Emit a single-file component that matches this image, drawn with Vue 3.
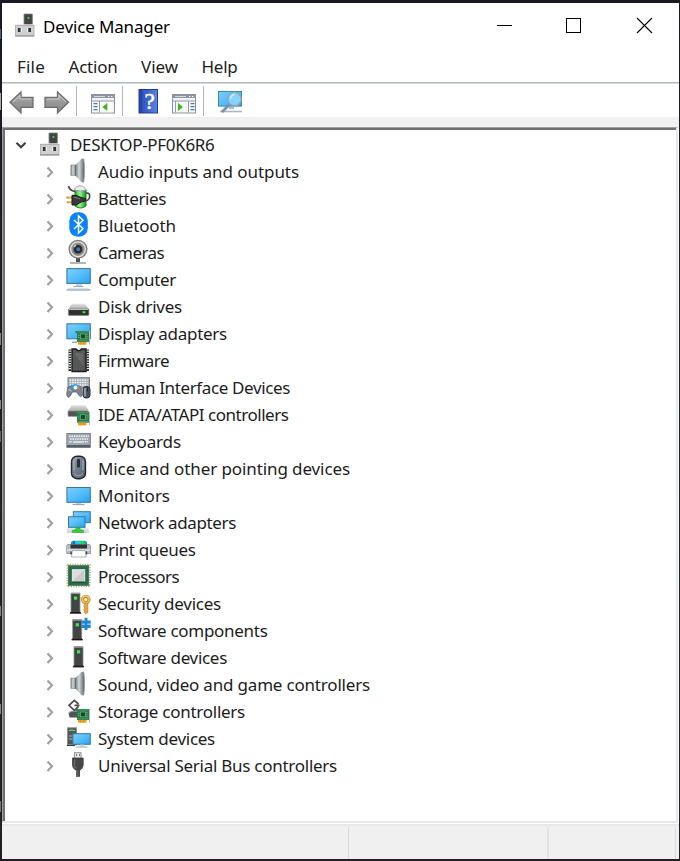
<script setup>
import { reactive } from 'vue'

const menus = reactive([
  { name: 'File', width: 28 },
  { name: 'Action', width: 49 },
  { name: 'View', width: 37 },
  { name: 'Help', width: 36 },
])

// width is the advance each label is set to, in pixels
const devices = [
  { name: 'Audio inputs and outputs', icon: 'speaker', width: 201 },
  { name: 'Batteries', icon: 'battery', width: 68 },
  { name: 'Bluetooth', icon: 'bluetooth', width: 78 },
  { name: 'Cameras', icon: 'camera', width: 66 },
  { name: 'Computer', icon: 'computer', width: 78 },
  { name: 'Disk drives', icon: 'disk', width: 84 },
  { name: 'Display adapters', icon: 'display', width: 129 },
  { name: 'Firmware', icon: 'firmware', width: 71 },
  { name: 'Human Interface Devices', icon: 'hid', width: 192 },
  { name: 'IDE ATA/ATAPI controllers', icon: 'ide', width: 190.5 },
  { name: 'Keyboards', icon: 'keyboard', width: 83 },
  { name: 'Mice and other pointing devices', icon: 'mouse', width: 252 },
  { name: 'Monitors', icon: 'monitor', width: 72 },
  { name: 'Network adapters', icon: 'network', width: 138 },
  { name: 'Print queues', icon: 'printer', width: 97.5 },
  { name: 'Processors', icon: 'cpu', width: 81 },
  { name: 'Security devices', icon: 'security', width: 123 },
  { name: 'Software components', icon: 'component', width: 169.5 },
  { name: 'Software devices', icon: 'software', width: 129 },
  { name: 'Sound, video and game controllers', icon: 'speaker', width: 272 },
  { name: 'Storage controllers', icon: 'storage', width: 147 },
  { name: 'System devices', icon: 'system', width: 117 },
  { name: 'Universal Serial Bus controllers', icon: 'usb', width: 239 },
]

// Tracks the text so that it fills exactly the given width
const vFit = {
  mounted(el, { value }) {
    const natural = el.getBoundingClientRect().width
    el.style.letterSpacing = (value - natural) / el.textContent.length + 'px'
  },
}
</script>

<template>
  <div class="desktop">
    <svg class="defs" width="0" height="0">
      <defs>
        <linearGradient id="blue" x1="0" y1="0" x2="1" y2="1">
          <stop offset="0" stop-color="#7fd0fb" /><stop offset=".5" stop-color="#55bdfa" /><stop offset="1" stop-color="#28a3f5" />
        </linearGradient>
        <linearGradient id="metal" x1="0" y1="0" x2="1" y2="0">
          <stop offset="0" stop-color="#777e83" /><stop offset=".45" stop-color="#d3d8db" /><stop offset="1" stop-color="#6f7579" />
        </linearGradient>
        <linearGradient id="silver" x1="0" y1="0" x2="0" y2="1">
          <stop offset="0" stop-color="#e4e4e4" /><stop offset="1" stop-color="#a9a9a9" />
        </linearGradient>
        <linearGradient id="arrow" x1="0" y1="0" x2="0" y2="1">
          <stop offset="0" stop-color="#b9b9b9" /><stop offset=".5" stop-color="#979797" /><stop offset="1" stop-color="#888" />
        </linearGradient>
        <linearGradient id="help" x1="0" y1="0" x2="1" y2="0">
          <stop offset="0" stop-color="#2745a4" /><stop offset=".25" stop-color="#3458c4" /><stop offset="1" stop-color="#5c84e2" />
        </linearGradient>
        <linearGradient id="green" x1="0" y1="0" x2="1" y2="0">
          <stop offset="0" stop-color="#25ad30" /><stop offset=".45" stop-color="#9af28d" /><stop offset="1" stop-color="#159326" />
        </linearGradient>
        <linearGradient id="slate" x1="0" y1="0" x2="1" y2="1">
          <stop offset="0" stop-color="#8e99a7" /><stop offset="1" stop-color="#566171" />
        </linearGradient>
        <g id="board">
          <path d="M.500 1H14v11H2V3H.500z" fill="#2a7d48" />
          <path d="M14.500 1v13.500" stroke="#b4bcb4" />
          <path d="M2.500 2h11M2.500 10.800h11" stroke="#4ba36b" stroke-width=".8" />
          <rect x="5.500" y="4" width="5" height="4.800" fill="#164a2b" stroke="#6fb587" stroke-width=".7" />
          <path d="M12 4v5M3.800 5v4" stroke="#8ed19e" stroke-width=".8" stroke-dasharray="1 1" />
          <path d="M3 12h8.500v2.700H3z" fill="#f2a21a" /><path d="M5.500 12v2.700M8.500 12v2.700" stroke="#d98a10" stroke-width=".6" />
        </g>
        <g id="tower">
          <path d="M1 0h9v19H1z" fill="#424446" stroke="#8b8d8e" stroke-width=".8" />
          <path d="M1 .500h9" stroke="#979999" />
          <path d="M0 20.300h11l-1-1.300H1z" fill="#111" stroke="#222" stroke-width=".8" />
          <rect x="4" y="3.500" width="3.200" height="3.200" fill="#39ef43" />
        </g>
        <g id="device">
          <path d="M12 2h8.400v11H12z" fill="#444" stroke="#858585" stroke-width=".8" />
          <path d="M15.500 5h1.900v1.900h-1.900z" fill="#32df35" />
          <path d="M4 12.300h17.500v1.500H4z" fill="#e9e9e9" />
          <rect x="3.400" y="13.400" width="18.600" height="10.400" fill="#d0d0d2" stroke="#a9a9ab" stroke-width=".8" />
          <path d="M3.200 24h19" stroke="#858585" />
          <rect x="5.900" y="16" width="2.800" height="4" fill="#333" /><rect x="16.200" y="16" width="2.800" height="4" fill="#333" />
          <path d="M9.300 16v4M15.600 16v4" stroke="#f7f7f7" />
        </g>
      </defs>
    </svg>

    <aside class="backdrop">
      <i class="chip c1"></i><i class="chip c2"></i><i class="chip c3"></i><i class="chip c4"></i>
      <i class="chip c5"></i><i class="chip c6"></i><i class="chip c7"></i><i class="chip c8"></i>
    </aside>

    <main class="window">
      <header class="titlebar">
        <svg class="app-icon" width="26" height="27" viewBox="0 0 26 27"><use href="#device" /></svg>
        <h1><span v-fit="127">Device Manager</span></h1>
        <svg class="controls" width="160" height="20" viewBox="0 0 160 20" shape-rendering="crispEdges">
          <path d="M1 9.500h15" stroke="#000" />
          <rect x="70.500" y="2.500" width="14" height="14" fill="none" stroke="#000" />
          <path d="M141 2l15 15M156 2l-15 15" stroke="#000" stroke-width="1.100" shape-rendering="auto" />
        </svg>
      </header>

      <nav class="menubar">
        <span v-for="m in menus" :key="m.name"><span v-fit="m.width">{{ m.name }}</span></span>
      </nav>

      <section class="toolbar">
        <svg width="250" height="33" viewBox="0 0 250 33">
          <path d="M8 18.300l11-10.300v5.500h12v9.800H19v5.600z" fill="url(#arrow)" stroke="#6d6d6d" stroke-width="1.300" />
          <path d="M11 18l7-6.500V15h11" fill="none" stroke="#cecece" stroke-width=".9" />
          <path d="M66.500 18.300L55.500 8v5.500H43v9.800h12.500v5.600z" fill="url(#arrow)" stroke="#6d6d6d" stroke-width="1.300" />
          <path d="M45 15h12v-4l7 7" fill="none" stroke="#cecece" stroke-width=".9" />
          <path d="M74.500 2v30M120.500 2v30M201.500 2v30" stroke="#b5b5b5" />

          <g id="pane">
            <rect x="89.500" y="10.500" width="23" height="18.500" fill="#f7f7f7" stroke="#8c929c" />
            <path d="M90 11h22v3H90z" fill="#8b94a4" /><path d="M92 12.500h11" stroke="#d1d6df" /><path d="M106 12.500h1.500M109 12.500h1.500" stroke="#fff" />
            <path d="M90 15.500h22" stroke="#eef" /><path d="M90 17h22" stroke="#9198a4" />
          </g>
          <path d="M97.500 17v11.500" stroke="#969da8" /><path d="M91.500 19.700h4M91.500 22.700h4M91.500 25.700h4" stroke="#467daf" stroke-width="1.300" />
          <path d="M98.500 18h11v10.300h-11z" fill="#fff" /><path d="M105.300 19v8l-5-4z" fill="#3db51f" />

          <rect x="137" y="5.500" width="18.500" height="23.500" fill="url(#help)" stroke="#203d93" />
          <path d="M139.500 6v22.500" stroke="#233f99" />
          <text class="help-mark" x="142.500" y="25">?</text>

          <use href="#pane" x="81" />
          <path d="M186.500 17v11.500" stroke="#969da8" /><path d="M188.500 19.700h4M188.500 22.700h4M188.500 25.700h4" stroke="#467daf" stroke-width="1.300" />
          <path d="M173.500 17v11.500" stroke="#969da8" /><path d="M176 19v8l5-4z" fill="#3db51f" />

          <rect x="216.500" y="7.500" width="23" height="14.600" fill="url(#blue)" stroke="#3c88ac" />
          <path d="M218 27.500h22" stroke="#aab7c2" stroke-width="1.600" /><path d="M227 23h5v2h-5z" fill="#a7bbc8" />
          <circle cx="232.500" cy="15" r="6.700" fill="#84d4fb" stroke="#8ea8b8" stroke-width="1.500" />
          <path d="M228.500 15a4.500 4.500 0 0 1 4-4.500" fill="none" stroke="#c2edff" stroke-width="1.500" />
          <path d="M227.500 20.500l-7.500 7.500" stroke="#7593a7" stroke-width="2.800" />
        </svg>
      </section>

      <section class="tree">
        <div class="row root">
          <svg class="chevron" width="12" height="27" viewBox="0 0 12 27"><path d="M1.500 11.700l4.500 4.500 4.500-4.500" fill="none" stroke="#404040" stroke-width="2.200" /></svg>
          <svg class="icon" width="26" height="27" viewBox="0 0 26 27"><use href="#device" /></svg>
          <span class="label"><span v-fit="144.500">DESKTOP-PF0K6R6</span></span>
        </div>

        <div v-for="d in devices" :key="d.name" class="row">
          <svg class="chevron" width="10" height="27" viewBox="0 0 10 27"><path d="M2.500 9.600l4.500 4.700-4.500 4.700" fill="none" stroke="#a0a0a0" stroke-width="2.200" /></svg>
          <svg class="icon" width="26" height="27" viewBox="0 0 26 27">
            <g v-if="d.icon === 'speaker'">
              <path d="M4.800 7h5v10.500h-5z" fill="url(#metal)" stroke="#858b90" stroke-width=".6" />
              <path d="M9.500 7l6-6.200h2v23.500h-2l-6-6.600z" fill="url(#metal)" />
              <path d="M17.500.800c1.300 2 1.300 21 0 23.500-1.500-4-1.500-19 0-23.500z" fill="#6b7074" stroke="#8d9397" stroke-width=".8" />
              <path d="M9.500 7v10.500" stroke="#666c71" />
            </g>
            <g v-else-if="d.icon === 'battery'">
              <path d="M9 4.500h11V21q-5.500 4-11 0z" fill="url(#green)" stroke="#148526" />
              <path d="M8.500 5Q9.500 .800 14 .800T20 5q-5.500 2-11.500 0z" fill="#eceaf3" stroke="#94929c" stroke-width=".8" />
              <path d="M2.500 1q1 4.500 6.500 5.500M19.500 16q5-1 4-6.500-1-2-3.500-1.300" fill="none" stroke="#4a4a4a" stroke-width="1.700" />
              <path d="M.300 12.500h6M.800 17.300h6" stroke="#c8942a" stroke-width="2" /><path d="M2 12h4M2.500 16.800h4" stroke="#ffe393" stroke-width=".8" />
              <path d="M6 10.300h4l5 2.200 4.500 1v2.500l-4.500 1-5 3H6z" fill="#3a3a3a" stroke="#1c1c1c" /><path d="M8 12l6 2" stroke="#7d7d7d" />
            </g>
            <g v-else-if="d.icon === 'bluetooth'">
              <rect x="3.300" y=".200" width="18.500" height="24.600" rx="8.500" fill="#0a82fa" />
              <path d="M8 8l9 8.700-4.500 4.300V4l4.500 4.300L8 17" fill="none" stroke="#fff" stroke-width="1.500" />
            </g>
            <g v-else-if="d.icon === 'camera'">
              <path d="M10 18.500h4V23h-4z" fill="#4e4e4e" /><path d="M4 24h16" stroke="#8c8c8c" stroke-width="1.300" />
              <circle cx="12" cy="10.300" r="8.800" fill="#e6e6e6" stroke="#7b7b7b" stroke-width="1.400" />
              <circle cx="12" cy="10.300" r="6" fill="#777" stroke="#8f8f8f" stroke-width="1.400" />
              <circle cx="12" cy="10.300" r="3.800" fill="#20292f" stroke="#2a2a2a" /><circle cx="12.300" cy="10.300" r="2" fill="#3f78ad" />
              <path d="M8 8l2-2" stroke="#d4d4d4" stroke-width="1.300" />
            </g>
            <g v-else-if="d.icon === 'computer'">
              <rect x=".900" y="2.600" width="23.400" height="14.800" fill="url(#blue)" stroke="#35769a" />
              <path d="M10 18h6v2.500h-6z" fill="#c4d3df" /><path d="M7.500 20.500h10" stroke="#91a6b8" />
              <path d="M2.500 21.700h20l2 2.500H.500z" fill="#d9e4ec" /><path d="M.500 24h24" stroke="#7e9caf" />
            </g>
            <g v-else-if="d.icon === 'disk'">
              <path d="M6 10.800h13l3.800 5.400H2.400z" fill="url(#silver)" /><rect x="2.400" y="16" width="20.500" height="6.400" rx=".8" fill="#303030" stroke="#898989" stroke-width=".8" />
              <path d="M3 16.500h19" stroke="#c1c1c1" /><path d="M16.500 18.200h3v2h-3z" fill="#2cf030" />
            </g>
            <g v-else-if="d.icon === 'display'">
              <rect x=".900" y="3.800" width="23.400" height="15" fill="url(#blue)" stroke="#35769a" /><path d="M6 22.300h5" stroke="#91a6b8" stroke-width="1.500" />
              <use href="#board" x="9" y="10" />
            </g>
            <g v-else-if="d.icon === 'firmware'">
              <path d="M3.800 2.500v21.500M21.700 2.500v21.500" stroke="#222" stroke-width="2.500" /><path d="M3.800 3.500v20M21.700 3.500v20" stroke="#e5e5e5" stroke-width="2.500" stroke-dasharray="1.300 1.200" />
              <path d="M6 2h4q2.500 3.500 5.500 0H20v22.500H6z" fill="#555758" stroke="#1b1b1b" stroke-width="1.400" /><path d="M8 6h9v13z" fill="#646668" />
            </g>
            <g v-else-if="d.icon === 'hid'">
              <rect x="2" y="3.700" width="21.500" height="10.500" fill="#a8adb3" stroke="#7a8188" /><path d="M3.500 6h18M3.500 8.500h18M3.500 11h18" stroke="#f4f6f7" stroke-width="1.500" stroke-dasharray="1.700 .8" />
              <path d="M2 13q4-2.500 7 0 4-2.500 6 0l1 8q-1 4-4-1l-1.500-2h-4L4 22.500q-3 2.500-3.300-3z" fill="#7d8690" stroke="#5a636d" stroke-width=".8" />
              <path d="M5 12.500q4-4.500 8-.500V15H5z" fill="#299df0" /><circle cx="9.500" cy="13.500" r="2" fill="#edf6ff" /><circle cx="12.800" cy="14" r="1.200" fill="#ed702b" />
              <path d="M2.500 15.500q2 0 2.500 2" stroke="#ced4d8" fill="none" />
              <rect x="17" y="12.500" width="7" height="11.500" rx="3" fill="#485360" stroke="#27313a" /><path d="M19 14v8.500" stroke="#aab3bb" stroke-width="1.500" /><path d="M21.500 13.500v4" stroke="#202830" />
            </g>
            <g v-else-if="d.icon === 'ide'">
              <path d="M5.500 4.200h14l3.500 6H2z" fill="url(#silver)" /><path d="M2 10h20v5.500H3q-1 0-1-1z" fill="#545454" stroke="#999" stroke-width=".7" /><use href="#board" x="9" y="9.700" />
            </g>
            <g v-else-if="d.icon === 'keyboard'">
              <rect x=".800" y="5.500" width="23.600" height="13.700" fill="#a0a6ad" stroke="#7d868f" /><path d="M1 17h23v2.500H1z" fill="#545e69" />
              <path d="M3 8.300h20M4 11h18M3 13.800h3M19 13.800h3" stroke="#f2f4f5" stroke-width="1.500" stroke-dasharray="1.600 .8" /><path d="M7 14h11" stroke="#f2f4f5" stroke-width="1.400" />
            </g>
            <g v-else-if="d.icon === 'mouse'">
              <rect x="5.500" y="1.200" width="14" height="22.500" rx="5.500" fill="url(#slate)" stroke="#22262a" stroke-width="1.400" />
              <path d="M8 15V5.500q1-2 3-2.500M17 15V5.500" stroke="#a3aebb" stroke-width="1.200" fill="none" /><rect x="11" y="4" width="3" height="8.500" rx=".8" fill="#2b3037" /><path d="M8 18.500q4.500 4.500 9 0" fill="none" stroke="#9aa6b6" />
            </g>
            <g v-else-if="d.icon === 'monitor'">
              <rect x=".900" y="5.500" width="23.400" height="14.800" fill="url(#blue)" stroke="#35769a" /><path d="M10 21h5v1h-5z" fill="#c4d3df" /><path d="M6.500 22.500h12" stroke="#91a6b8" stroke-width="1.200" />
            </g>
            <g v-else-if="d.icon === 'network'">
              <rect x="7.300" y="2.700" width="17" height="11" fill="url(#blue)" stroke="#35769a" />
              <path d="M.800 19.300h22v3.900h-22z" fill="#dfe1e1" /><path d="M.800 23.200h22" stroke="#aaa" stroke-width=".6" />
              <rect x="2.500" y="7.800" width="16.500" height="10.500" fill="url(#blue)" stroke="#35769a" />
              <path d="M10 18.500h4v2l3.500 1v2H6.300v-2l3.700-1z" fill="#36ca3c" stroke="#25a72e" stroke-width=".6" />
            </g>
            <g v-else-if="d.icon === 'printer'">
              <path d="M5 6l2-1.300h12L21 6v4H5z" fill="#2093dc" /><path d="M9 5h6v5H9z" fill="#28c5e0" /><path d="M15 5h3l2 5h-5z" fill="#1de129" /><path d="M7 5h2v5H7z" fill="#1769bd" />
              <path d="M1.500 8.500h22q1 0 1 2v7H.700v-7q0-2 .8-2z" fill="#b7bbc0" stroke="#8a9096" stroke-width=".8" /><path d="M4.500 8.500h16.500v4H4.500z" fill="#303438" />
              <path d="M1 14h23" stroke="#e4e6e8" stroke-width="1.500" /><path d="M6.500 14.500h12.500l1.200 6.500H5.300z" fill="#fff" stroke="#9a9fa4" stroke-width=".8" /><path d="M5 15.500v3M20.500 15.500v3" stroke="#444" stroke-width="1.400" />
            </g>
            <g v-else-if="d.icon === 'cpu'">
              <rect x="1.300" y="1.500" width="22.600" height="22" fill="none" stroke="#c5a269" stroke-width="1.500" stroke-dasharray="1.200 1.300" /><rect x="2.500" y="2.700" width="20.200" height="19.600" fill="#286a4b" stroke="#3d7c5c" />
              <rect x="6.400" y="6.700" width="12.300" height="11.600" fill="#dcdcdc" stroke="#e9e9e9" /><path d="M18 7v11H7z" fill="#c8caca" /><path d="M6 19h13" stroke="#17402c" />
            </g>
            <g v-else-if="d.icon === 'security'">
              <use href="#tower" x="4" y="3" />
              <circle cx="19.800" cy="9.500" r="3.200" fill="none" stroke="#ca8a1d" stroke-width="3.200" /><circle cx="19.800" cy="9.300" r="3.300" fill="none" stroke="#f2c76b" stroke-width="1.300" />
              <path d="M18.500 13h3.400v9.500L20 24l-1.500-1v-2l-1-1 1-1v-2l-1-1 1-1z" fill="#e4a635" stroke="#b67514" stroke-width=".5" />
            </g>
            <g v-else-if="d.icon === 'component'">
              <use href="#tower" x="5.700" y="2.700" />
              <path d="M15.500 3.500h9.200v3.200h-9.200zM15.500 7.700h9.200V11h-9.200z" fill="#2587d2" /><path d="M18.500 .800h3v12.300h-3z" fill="#2587d2" /><path d="M16 7.200h2.500M21.500 7.200h3" stroke="#7fb9e5" />
            </g>
            <use v-else-if="d.icon === 'software'" href="#tower" x="7" y="2.700" />
            <g v-else-if="d.icon === 'storage'">
              <path d="M2.500 14.500L5 13h9v6.500H3.500z" fill="#505455" /><path d="M3 14.500L5 13h10" stroke="#c4c7c8" stroke-width="1.200" fill="none" />
              <path d="M12.500 6L8.300 2.300 3 7.300l5.300 5L12.500 8.500M8.500 7.300h5" fill="none" stroke="#4c4c4c" stroke-width="1.700" /><use href="#board" x="9" y="10" />
            </g>
            <g v-else-if="d.icon === 'system'">
              <rect x="1.500" y="2.800" width="9" height="17" fill="#525658" stroke="#8b8f91" /><path d="M3 5.500h6M3 11h4M3 14h4" stroke="#b3b7b9" /><path d="M4 4.500h3v1.500H4z" fill="#36dc31" /><path d="M1 20.500h8" stroke="#333" />
              <rect x="6.900" y="8.700" width="17.400" height="10.600" fill="url(#blue)" stroke="#35769a" /><path d="M14 19.500h4v2h-4z" fill="#c4d3df" /><path d="M10.500 22h11" stroke="#91a6b8" />
            </g>
            <g v-else-if="d.icon === 'usb'">
              <rect x="8.500" y=".700" width="6.500" height="6" fill="#e7e7e7" stroke="#969696" /><path d="M10 3h1M13 3h1" stroke="#555" stroke-width="1.400" />
              <path d="M6.500 6h10.700v7q0 3-3 5H9.500q-3-2-3-5z" fill="#474747" stroke="#303030" stroke-width=".7" /><path d="M8.500 7.500v6q0 2 2 3" fill="none" stroke="#707070" stroke-width="1.300" /><path d="M10 18h4v6.800h-4z" fill="#4b4b4b" /><path d="M11 18v6" stroke="#7a7a7a" />
            </g>
          </svg>
          <span class="label"><span v-fit="d.width">{{ d.name }}</span></span>
        </div>
      </section>

      <footer class="statusbar">
        <div class="pane first"></div><div class="pane second"></div><div class="pane third"></div>
      </footer>
    </main>
  </div>
</template>

<style>
body { margin: 0; background: #1d1b22; }
</style>

<style scoped>
.desktop { box-sizing: border-box; width: 680px; height: 861px; padding: 3px 1px 2px 2px; position: relative; overflow: hidden; background: linear-gradient(#1a1822, #202427 60%, #211f21); font-family: "Noto Sans", "Open Sans", sans-serif; color: #1c1c1c; }
.defs { position: absolute; }
.backdrop { position: absolute; left: 0; top: 0; width: 2px; height: 861px; }
.chip { position: absolute; left: 0; width: 1px; background: #858585; }
.c1 { top: 29px; height: 10px; background: #4c5788; }
.c2 { top: 93px; height: 17px; background: #aaa; }
.c3 { top: 333px; height: 12px; }
.c4 { top: 400px; height: 9px; }
.c5 { top: 431px; height: 11px; background: #666; }
.c6 { top: 606px; height: 10px; }
.c7 { top: 704px; height: 10px; }
.c8 { top: 801px; height: 11px; background: #777; }
.window { width: 677px; height: 856px; background: #fff; display: flex; flex-direction: column; }
.titlebar { height: 46px; flex: none; display: flex; align-items: flex-start; padding-left: 10px; }
.app-icon { margin-top: 9px; }
h1 { margin: 11px 0 0 5px; font-size: 17px; line-height: 26px; font-weight: 400; color: #000; flex: 1; white-space: nowrap; }
h1 > span, .menubar > span > span, .label > span { display: inline-block; white-space: nowrap; }
.controls { margin: 13px 23px 0 0; }
.menubar { height: 33px; flex: none; display: flex; gap: 23.500px; padding: 0 15px; border-bottom: 1px solid #b5b6b8; font-size: 17px; }
.menubar > span { margin-top: 3px; height: 30px; line-height: 30px; }
.toolbar { height: 34px; flex: none; border-bottom: 10px solid #f0f0f0; box-shadow: inset 0 1px #d4dade; }
.toolbar svg { display: block; margin-top: 1px; }
.help-mark { font: 23px "Liberation Serif", serif; fill: #fff; stroke: #fff; stroke-width: .5px; }
.tree { flex: none; box-sizing: border-box; width: 676px; height: 696px; padding: 3px 0 0 2px; background: #fff; border: solid; border-width: 1px 2px 2px 1px; border-color: #a0a0a0 #e8e8e8 #e8e8e8 #a0a0a0; box-shadow: inset 2px 2px #707070; }
.row { height: 27px; display: flex; align-items: center; padding-left: 40px; }
.row .icon { margin-left: 11px; flex: none; }
.label { margin-left: 6px; font-size: 17px; line-height: 27px; }
.root { padding-left: 10px; }
.root .icon { margin-left: 10px; }
.root .label { margin-left: 7px; }
.chevron { flex: none; }
.statusbar { flex: 1; margin-top: 1px; display: flex; background: #f0f0f0; border-top: 2px solid #e8e8e8; padding-top: 1px; }
.pane { border-right: 1px solid #d9d9d9; box-sizing: border-box; }
.first { width: 347px; }
.second { width: 200px; border-right: 2px solid #e3e3e3; }
.third { width: 127px; }
</style>
